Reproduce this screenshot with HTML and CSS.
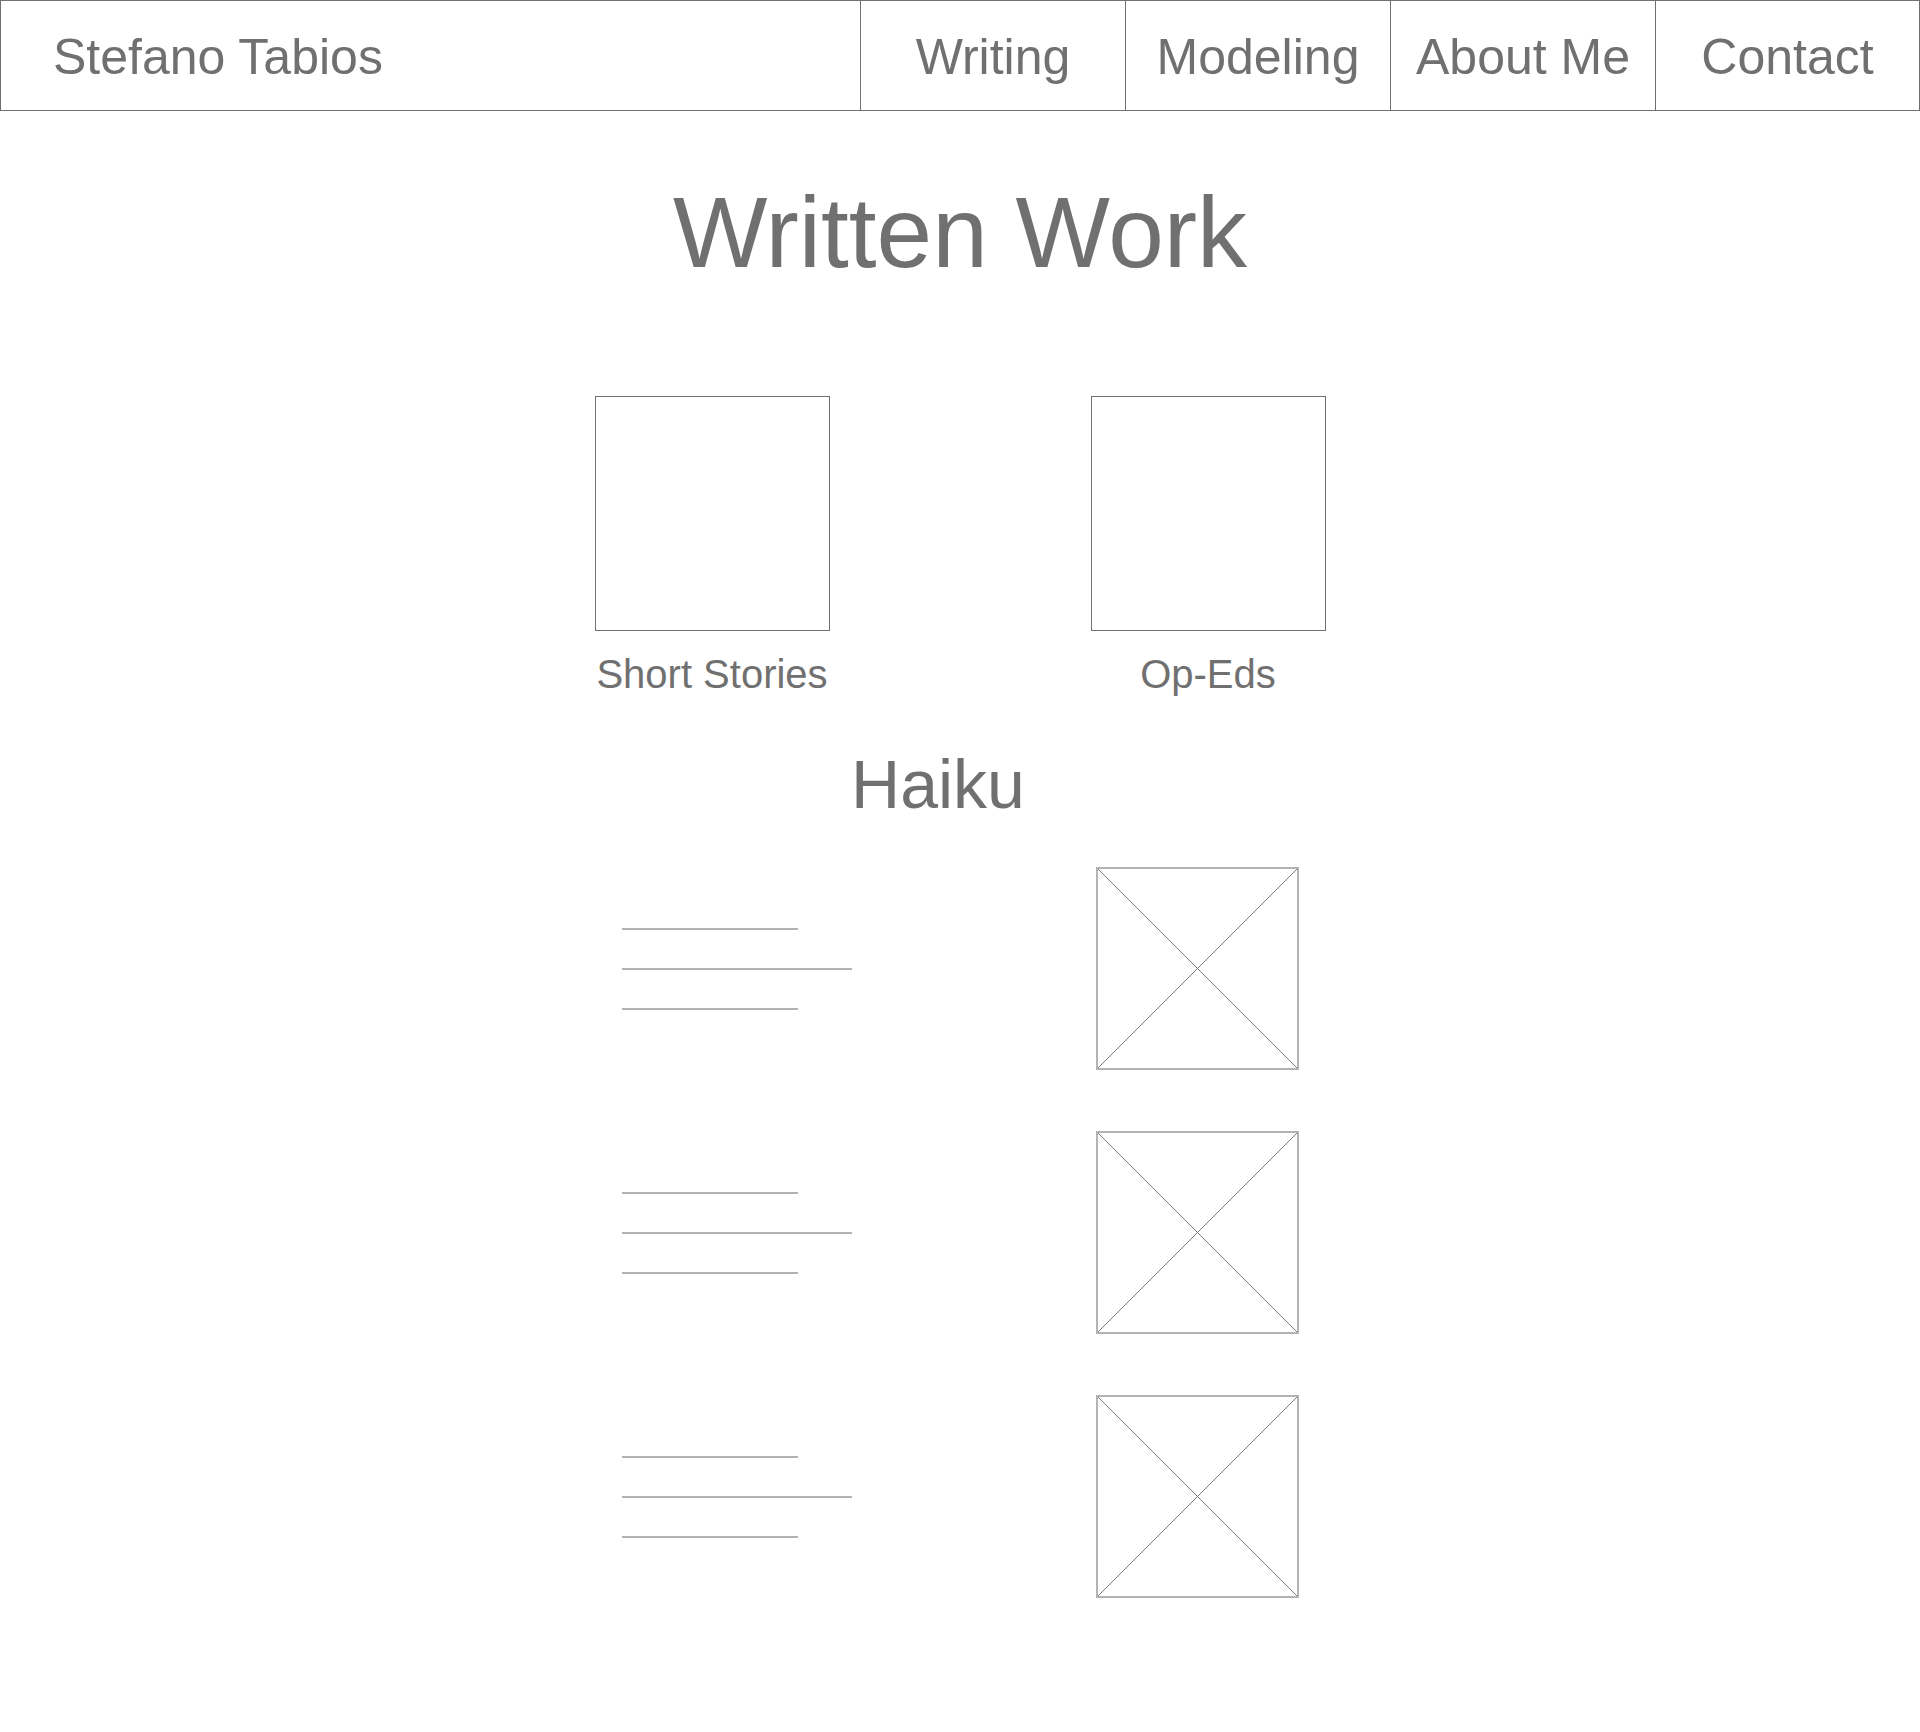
FILE: index.html
```html
<!DOCTYPE html>
<html>

<head>
    <title>Stefano Tabios - Written Work</title>

    <link rel="stylesheet" href="styles.css">
</head>

<body>
    <header class="topbar">
        <div class="brand">Stefano Tabios</div>
        <nav class="links">
            <a href="#">Writing</a>
            <a href="#">Modeling</a>
            <a href="#">About Me</a>
            <a href="#">Contact</a>
        </nav>
    </header>

    <main>
        <h1 class="pageTitle">Written Work</h1>

        <section class="categories">
            <a class="category" href="#">
                <div class="thumb"></div>
                <span class="label">Short Stories</span>
            </a>
            <a class="category" href="#">
                <div class="thumb"></div>
                <span class="label">Op-Eds</span>
            </a>
        </section>

        <section class="haiku">
            <h2 class="haikuTitle">Haiku</h2>

            <div class="haikuRow">
                <div class="verse">
                    <span class="line short"></span>
                    <span class="line long"></span>
                    <span class="line short"></span>
                </div>
                <svg class="placeholder" viewBox="0 0 203 203" width="203" height="203">
                    <rect x="1" y="1" width="201" height="201" fill="none" stroke="#b3b3b3" stroke-width="2" />
                    <line x1="2" y1="2" x2="201" y2="201" stroke="#7a7a7a" stroke-width="1" />
                    <line x1="201" y1="2" x2="2" y2="201" stroke="#7a7a7a" stroke-width="1" />
                </svg>
            </div>

            <div class="haikuRow">
                <div class="verse">
                    <span class="line short"></span>
                    <span class="line long"></span>
                    <span class="line short"></span>
                </div>
                <svg class="placeholder" viewBox="0 0 203 203" width="203" height="203">
                    <rect x="1" y="1" width="201" height="201" fill="none" stroke="#b3b3b3" stroke-width="2" />
                    <line x1="2" y1="2" x2="201" y2="201" stroke="#7a7a7a" stroke-width="1" />
                    <line x1="201" y1="2" x2="2" y2="201" stroke="#7a7a7a" stroke-width="1" />
                </svg>
            </div>

            <div class="haikuRow">
                <div class="verse">
                    <span class="line short"></span>
                    <span class="line long"></span>
                    <span class="line short"></span>
                </div>
                <svg class="placeholder" viewBox="0 0 203 203" width="203" height="203">
                    <rect x="1" y="1" width="201" height="201" fill="none" stroke="#b3b3b3" stroke-width="2" />
                    <line x1="2" y1="2" x2="201" y2="201" stroke="#7a7a7a" stroke-width="1" />
                    <line x1="201" y1="2" x2="2" y2="201" stroke="#7a7a7a" stroke-width="1" />
                </svg>
            </div>
        </section>
    </main>
</body>

</html>
```

FILE: styles.css
```css
body {
    font-family: "Liberation Sans", Arial, sans-serif;
    color: #707070;
    background: #ffffff;
    margin: 0;
}

.topbar {
    display: flex;
    height: 111px;
    box-sizing: border-box;
    border: 1px solid #707070;
}

.brand {
    flex: 1;
    display: flex;
    align-items: center;
    padding: 3px 0 0 52px;
    font-size: 50px;
}

.links {
    display: flex;
}

.links>a {
    width: 265px;
    box-sizing: border-box;
    border-left: 1px solid #707070;
    display: flex;
    align-items: center;
    justify-content: center;
    padding-top: 3px;
    font-size: 50px;
    color: #707070;
    text-decoration: none;
}

.links>a:last-child {
    width: 264px;
}

.pageTitle {
    margin: 71px 0 0;
    font-size: 100px;
    line-height: 100px;
    font-weight: normal;
    text-align: center;
}

.categories {
    display: flex;
    justify-content: center;
    gap: 261px;
    margin-top: 114px;
}

.category {
    display: flex;
    flex-direction: column;
    align-items: center;
    width: 235px;
    color: #707070;
    text-decoration: none;
}

.thumb {
    width: 235px;
    height: 235px;
    box-sizing: border-box;
    border: 1px solid #707070;
}

.label {
    margin-top: 21px;
    font-size: 40px;
    line-height: 45px;
    white-space: nowrap;
}

.haiku {
    padding-bottom: 120px;
}

.haikuTitle {
    margin: 53px 0 49px;
    padding-right: 44px;
    font-size: 68px;
    line-height: 68px;
    font-weight: normal;
    text-align: center;
}

.haikuRow {
    display: flex;
    justify-content: space-between;
    align-items: center;
    width: 677px;
    margin: 0 auto 61px;
}

.verse {
    display: flex;
    flex-direction: column;
    gap: 38px;
    width: 230px;
}

.line {
    display: block;
    height: 2px;
    background: #b3b3b3;
}

.line.short {
    width: 176px;
}

.line.long {
    width: 230px;
}

.placeholder {
    display: block;
}
```
